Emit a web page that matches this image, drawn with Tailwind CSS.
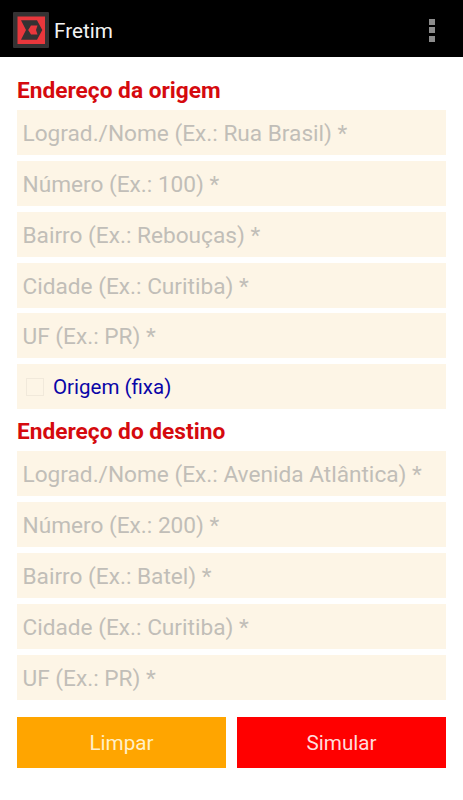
<!DOCTYPE html>
<html lang="pt-BR">
<head>
  <meta charset="UTF-8">
  <meta name="viewport" content="width=device-width, initial-scale=1.0">
  <title>Fretim</title>
  <script src="https://cdn.jsdelivr.net/npm/@tailwindcss/browser@4"></script>
</head>
<body class="bg-white font-[Roboto,sans-serif]">
  <!-- Action bar -->
  <header class="h-[57px] bg-black flex items-center justify-between pl-[13px] pr-[28px] pb-px">
    <div class="flex items-center pt-[3px]">
      <svg class="w-9 h-9" viewBox="0 0 36 36">
        <rect width="36" height="36" rx="1" fill="#353233" />
        <rect x="4.500" y="4.500" width="27.500" height="27.500" fill="#e9373c" />
        <path d="M8 8.300H24L29.300 18L24 27.800H8L13 18Z" fill="#353233" />
        <path d="M18 13.500H24.500L23 18L24.500 22.500H18L15.200 18Z" fill="#e9373c" />
      </svg>
      <h1 class="ml-[5px] pt-[2px] text-[20.700px] leading-6 text-[#f3f3f3]">Fretim</h1>
    </div>
    <button class="flex flex-col gap-[2.500px] pt-[4px]" aria-label="Menu">
      <span class="w-[6px] h-[6px] bg-[#8c8c8c]"></span>
      <span class="w-[6px] h-[6px] bg-[#8c8c8c]"></span>
      <span class="w-[6px] h-[6px] bg-[#8c8c8c]"></span>
    </button>
  </header>

  <form class="px-[17px] pt-[19px]">
    <!-- Origem -->
    <h2 class="h-[34px] pt-px leading-[28px] text-[22.700px] font-bold text-[#d50a0e]">Endereço da origem</h2>
    <div class="flex flex-col gap-[5.850px]">
      <input type="text" placeholder="Lograd./Nome (Ex.: Rua Brasil) *" class="w-full h-[45px] pt-[2px] px-[5.500px] bg-[#fdf5e6] text-[22.650px] placeholder:text-[#c1beb8] outline-none">
      <input type="text" placeholder="Número (Ex.: 100) *" class="w-full h-[45px] pt-[2px] px-[5.500px] bg-[#fdf5e6] text-[22.650px] placeholder:text-[#c1beb8] outline-none">
      <input type="text" placeholder="Bairro (Ex.: Rebouças) *" class="w-full h-[45px] pt-[2px] px-[5.500px] bg-[#fdf5e6] text-[22.650px] placeholder:text-[#c1beb8] outline-none">
      <input type="text" placeholder="Cidade (Ex.: Curitiba) *" class="w-full h-[45px] pt-[2px] px-[5.500px] bg-[#fdf5e6] text-[22.650px] placeholder:text-[#c1beb8] outline-none">
      <input type="text" placeholder="UF (Ex.: PR) *" class="w-full h-[45px] pt-[2px] px-[5.500px] bg-[#fdf5e6] text-[22.650px] placeholder:text-[#c1beb8] outline-none">
      <label class="flex items-center h-[45px] pl-[9px] bg-[#fdf5e6]">
        <input type="checkbox" class="appearance-none w-[18px] h-[18px] border border-[#f1e9db]">
        <span class="ml-[9px] pt-px text-[20.500px] leading-6 text-[#0a05a8]">Origem (fixa)</span>
      </label>
    </div>

    <!-- Destino -->
    <h2 class="h-[42px] pt-[9px] leading-[28px] text-[22.700px] font-bold text-[#d50a0e]">Endereço do destino</h2>
    <div class="flex flex-col gap-[5.850px]">
      <input type="text" placeholder="Lograd./Nome (Ex.: Avenida Atlântica) *" class="w-full h-[45px] pt-[2px] px-[5.500px] bg-[#fdf5e6] text-[22.650px] placeholder:text-[#c1beb8] outline-none">
      <input type="text" placeholder="Número (Ex.: 200) *" class="w-full h-[45px] pt-[2px] px-[5.500px] bg-[#fdf5e6] text-[22.650px] placeholder:text-[#c1beb8] outline-none">
      <input type="text" placeholder="Bairro (Ex.: Batel) *" class="w-full h-[45px] pt-[2px] px-[5.500px] bg-[#fdf5e6] text-[22.650px] placeholder:text-[#c1beb8] outline-none">
      <input type="text" placeholder="Cidade (Ex.: Curitiba) *" class="w-full h-[45px] pt-[2px] px-[5.500px] bg-[#fdf5e6] text-[22.650px] placeholder:text-[#c1beb8] outline-none">
      <input type="text" placeholder="UF (Ex.: PR) *" class="w-full h-[45px] pt-[2px] px-[5.500px] bg-[#fdf5e6] text-[22.650px] placeholder:text-[#c1beb8] outline-none">
    </div>

    <!-- Botões -->
    <div class="grid grid-cols-2 gap-[11px] mt-[17.500px]">
      <button type="reset" class="h-[51px] pt-[2px] bg-[#ffa500] text-[20.700px] text-[#fff0c8]">Limpar</button>
      <button type="button" class="h-[51px] pt-[2px] bg-[#ff0000] text-[20.700px] text-[#ffdcdc]">Simular</button>
    </div>
  </form>
</body>
</html>
